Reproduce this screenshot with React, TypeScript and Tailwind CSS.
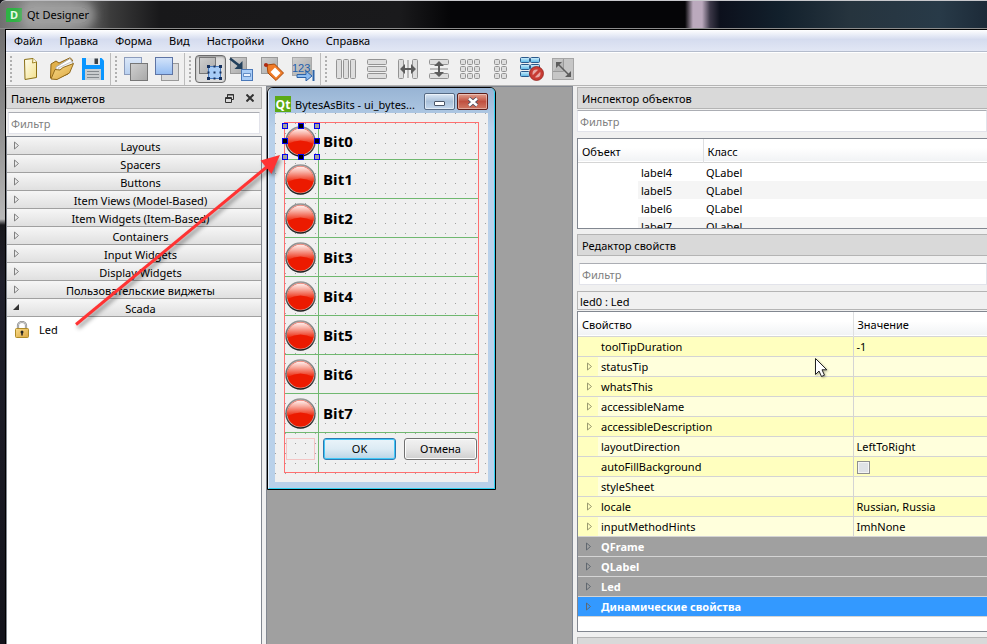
import type { ReactNode } from "react";

/* ---------- toolbar icons, drawn on a 24 x 24 grid ---------- */

function Icon({ children }: { children: ReactNode }) {
  return (
    <svg width="24" height="24" viewBox="0 0 24 24" aria-hidden="true">
      {children}
    </svg>
  );
}

const NewIcon = () => (
  <Icon>
    <path d="M5.500 2.500 L14 1.500 L17.500 5 V20.500 L6 22.500 Z" fill="url(#paper)" stroke="#8a6f14" />
    <path d="M14 1.500 L13.500 6 L17.500 5" fill="#fffbe0" stroke="#a58a2a" />
  </Icon>
);

const OpenIcon = () => (
  <Icon>
    <path d="M.5 21 L1 7 L6 4 L9 6 L20 .8 L22.500 3 L18 17 L6 22 Z" fill="#e0b04c" stroke="#8f6414" />
    <path d="M6 10 L20 1.500 L23 6 L18 14 L6 17 Z" fill="#fff" stroke="#a8a8a8" />
    <path d="M8 11 L22 4.500 L22.800 7 L9 13 Z" fill="#f3f3f3" stroke="#b5b5b5" strokeWidth=".7" />
    <path d="M1 22 L5 12.500 L10 13 L13 10.500 L23.500 6.500 L19.500 16 L7 22.500 Z" fill="url(#folder)" stroke="#946c1c" />
  </Icon>
);

const SaveIcon = () => (
  <Icon>
    <path d="M1 1 H20.500 L23 3.500 V23 H1 Z" fill="#0a96ff" />
    <rect x="5" y="1" width="14" height="7" fill="#e4e8ec" />
    <rect x="13.500" y="1.500" width="3.500" height="5.500" fill="#3c4044" />
    <rect x="4" y="12" width="16" height="11" fill="#c9ccce" />
    <path d="M6 14.500 H18 M6 17.500 H18 M6 20.500 H18" stroke="#858a8e" />
  </Icon>
);

const SendBackIcon = () => (
  <Icon>
    <rect x=".5" y=".5" width="17" height="17" fill="url(#paleSky)" stroke="#8c9cbc" />
    <rect x="6.500" y="6.500" width="17" height="17" fill="url(#steel)" stroke="#777" />
  </Icon>
);

const BringFrontIcon = () => (
  <Icon>
    <rect x="6.500" y="6.500" width="17" height="17" fill="#dadada" stroke="#999" />
    <rect x=".5" y=".5" width="17" height="17" fill="url(#sky)" stroke="#5e74a4" />
  </Icon>
);

const EditWidgetsIcon = () => (
  <Icon>
    <rect x="1.500" y=".5" width="16" height="16" fill="url(#steel)" stroke="#777" />
    <rect x="10.500" y="9.500" width="12" height="12" fill="#a8ccf6" stroke="#4a7cc0" />
    <path d="M9 8 h3 v3 h-3 Z M21 8 h3 v3 h-3 Z M9 20 h3 v3 h-3 Z M21 20 h3 v3 h-3 Z" fill="#16305c" />
    <path d="M15.500 8.500 h2 v2 h-2 Z M15.500 20.500 h2 v2 h-2 Z M9.500 14.500 h2 v2 h-2 Z M21.500 14.500 h2 v2 h-2 Z M15.500 14.500 h2 v2 h-2 Z" fill="#16305c" />
  </Icon>
);

const EditSignalsIcon = () => (
  <Icon>
    <rect x="1.500" y=".5" width="16" height="16" fill="url(#steel)" stroke="#999" />
    <path d="M1 1.500 L12 10" stroke="#22405c" strokeWidth="2.500" />
    <path d="M13.500 4 V12 H5.500 Z" fill="#22405c" />
    <rect x="12.500" y="12.500" width="11" height="11" fill="#a9cdf7" stroke="#4a78b8" />
    <path d="M14.500 16.500 H21.500 V19.500 H14.500 Z" fill="#eaf3ff" stroke="#4a78b8" strokeWidth=".8" />
  </Icon>
);

const EditBuddiesIcon = () => (
  <Icon>
    <rect x="1.500" y=".5" width="16" height="16" fill="url(#steel)" stroke="#999" />
    <path d="M4 8 L12 10 L14 18" fill="none" stroke="#333" />
    <path d="M7 8 L14.500 7 L23.500 16 L16 23.500 L8 16 Z" fill="#f07c28" stroke="#a84808" />
    <path d="M15 10.500 L20.500 16 L16 20.500 L10.500 15 Z" fill="#fff" />
    <circle cx="6" cy="8" r="2" fill="#b02a10" />
  </Icon>
);

const TabOrderIcon = () => (
  <Icon>
    <rect x="1.500" y=".5" width="19" height="18" fill="url(#steel)" stroke="#aaa" />
    <path d="M6 17.500 H15 V14 L21 19 L15 24 V20.500 H6 Z" fill="#8cbcf0" stroke="#2d62a6" />
    <path d="M22.500 13 V24" stroke="#2d62a6" strokeWidth="2" />
    <text x="1" y="15" fontSize="11" fill="#1d5fae" className="font-['Liberation_Sans',sans-serif]">123</text>
  </Icon>
);

function Slab({ x, y, w, h }: { x: number; y: number; w: number; h: number }) {
  return <rect x={x + 0.5} y={y + 0.5} width={w - 1} height={h - 1} rx="1" fill="#dedede" stroke="#949494" />;
}

const HorizontalIcon = () => (
  <Icon>
    {[2, 9, 16].map((x) => <Slab key={x} x={x} y={2} w={6} h={20} />)}
  </Icon>
);
const VerticalIcon = () => (
  <Icon>
    {[2, 9, 16].map((y) => <Slab key={y} x={2} y={y} w={20} h={6} />)}
  </Icon>
);
const HSplitIcon = () => (
  <Icon>
    <Slab x={2} y={2} w={6} h={20} />
    <Slab x={16} y={2} w={6} h={20} />
    <path d="M12 3 V21" stroke="#888" />
    <path d="M4 12 L9 7 V11 H15 V7 L20 12 L15 17 V13 H9 V17 Z" fill="#5c5c5c" />
  </Icon>
);
const VSplitIcon = () => (
  <Icon>
    <Slab x={2} y={2} w={20} h={6} />
    <Slab x={2} y={16} w={20} h={6} />
    <path d="M3 12 H21" stroke="#888" />
    <path d="M12 4 L7 9 H11 V15 H7 L12 20 L17 15 H13 V9 H17 Z" fill="#5c5c5c" />
  </Icon>
);
const GridIcon = () => (
  <Icon>
    {[2, 9, 16].map((x) => [2, 9, 16].map((y) => <Slab key={`${x}${y}`} x={x} y={y} w={6} h={6} />))}
  </Icon>
);
const FormIcon = () => (
  <Icon>
    {[5, 12].map((x) => [2, 9, 16].map((y) => <Slab key={`${x}${y}`} x={x} y={y} w={6} h={6} />))}
  </Icon>
);
const BreakIcon = () => (
  <Icon>
    {[0.5, 7.5, 14.5].map((y) =>
      [0.5, 10.5].map((x) => (
        <rect key={`${x}${y}`} x={x} y={y} width="9" height="5" rx="1" fill="url(#cyan)" stroke="#2a5a8c" />
      ))
    )}
    <circle cx="16.500" cy="16.500" r="5.500" fill="#e8a8a4" stroke="#c83c34" strokeWidth="3" />
    <path d="M12.500 20.500 L20.500 12.500" stroke="#c83c34" strokeWidth="3" />
    <circle cx="16.500" cy="16.500" r="7" fill="none" stroke="#8c1812" strokeWidth=".7" />
  </Icon>
);
const AdjustIcon = () => (
  <Icon>
    <rect x="1.500" y="1.500" width="21" height="21" fill="#c6c6c6" stroke="#a6a6a6" />
    <path d="M2 14.500 H12.500 V2" fill="#b8b8b8" stroke="#9a9a9a" />
    <path d="M7 7 L18 18" stroke="#5c5c5c" strokeWidth="1.500" />
    <path d="M5 5 H11 L5 11 Z M20 20 H14 L20 14 Z" fill="#5c5c5c" />
  </Icon>
);

const toolGroups: { label: string; pressed?: boolean; icon: () => ReactNode }[][] = [
  [
    { label: "Новый", icon: NewIcon },
    { label: "Открыть", icon: OpenIcon },
    { label: "Сохранить", icon: SaveIcon },
  ],
  [
    { label: "На задний план", icon: SendBackIcon },
    { label: "На передний план", icon: BringFrontIcon },
  ],
  [
    { label: "Изменение виджетов", icon: EditWidgetsIcon, pressed: true },
    { label: "Изменение сигналов", icon: EditSignalsIcon },
    { label: "Изменение партнёров", icon: EditBuddiesIcon },
    { label: "Порядок обхода", icon: TabOrderIcon },
  ],
  [
    { label: "По горизонтали", icon: HorizontalIcon },
    { label: "По вертикали", icon: VerticalIcon },
    { label: "Разделитель по горизонтали", icon: HSplitIcon },
    { label: "Разделитель по вертикали", icon: VSplitIcon },
    { label: "По сетке", icon: GridIcon },
    { label: "В две колонки", icon: FormIcon },
    { label: "Удалить компоновщик", icon: BreakIcon },
    { label: "Подогнать размер", icon: AdjustIcon },
  ],
];

function Gradients() {
  return (
    <svg width="0" height="0" className="absolute" aria-hidden="true">
      <defs>
        <linearGradient id="paper" x1="0" y1="0" x2="1" y2="1">
          <stop offset="0" stopColor="#fffef0" />
          <stop offset="1" stopColor="#f3e08a" />
        </linearGradient>
        <linearGradient id="folder" x1="0" y1="0" x2="1" y2="1">
          <stop offset="0" stopColor="#f9dc8a" />
          <stop offset="1" stopColor="#dca640" />
        </linearGradient>
        <linearGradient id="sky" x1="0" y1="0" x2="0" y2="1">
          <stop offset="0" stopColor="#d4e4fa" />
          <stop offset="1" stopColor="#94bcf2" />
        </linearGradient>
        <linearGradient id="paleSky" x1="0" y1="0" x2="0" y2="1">
          <stop offset="0" stopColor="#dce8f8" />
          <stop offset="1" stopColor="#b8d0f0" />
        </linearGradient>
        <linearGradient id="steel" x1="0" y1="0" x2="1" y2="1">
          <stop offset="0" stopColor="#d0d0d0" />
          <stop offset="1" stopColor="#a8a8a8" />
        </linearGradient>
        <linearGradient id="cyan" x1="0" y1="0" x2="0" y2="1">
          <stop offset="0" stopColor="#d4f0fc" />
          <stop offset="1" stopColor="#54b4e4" />
        </linearGradient>
        <linearGradient id="ledRim" x1="0" y1="0" x2="0" y2="1">
          <stop offset="0" stopColor="#989898" />
          <stop offset=".6" stopColor="#585858" />
          <stop offset="1" stopColor="#181818" />
        </linearGradient>
        <linearGradient id="ledGloss" x1="0" y1="0" x2="0" y2="1">
          <stop offset="0" stopColor="#fff0ee" />
          <stop offset=".35" stopColor="#f8b0a4" />
          <stop offset="1" stopColor="#ec2408" />
        </linearGradient>
      </defs>
    </svg>
  );
}

/* ---------- small shared parts ---------- */

function Expander({ className = "" }: { className?: string }) {
  return (
    <svg width="7" height="9" viewBox="0 0 7 9" className={className} aria-hidden="true">
      <path d="M1.500 1 V8 L5.500 4.500 Z" fill="none" stroke="currentColor" />
    </svg>
  );
}

function DockTitle({ children, controls }: { children: ReactNode; controls?: ReactNode }) {
  return (
    <div
      className={`flex h-[22px] shrink-0 items-center justify-between border-y border-l border-[#b4b4b4] bg-[#d9d9d9] px-1 leading-4 ${
        controls ? "border-r" : ""
      }`}
    >
      <h2 className="pt-0.5 whitespace-nowrap">{children}</h2>
      {controls}
    </div>
  );
}

function Filter({ label }: { label: string }) {
  return (
    <input
      type="text"
      aria-label={label}
      placeholder="Фильтр"
      className="block h-[22px] w-full min-w-0 border border-[#e2e3ea] border-t-[#abadb3] bg-white px-0.5 placeholder:text-[#808080] outline-none"
    />
  );
}

/* ---------- panels ---------- */

const categories = [
  "Layouts",
  "Spacers",
  "Buttons",
  "Item Views (Model-Based)",
  "Item Widgets (Item-Based)",
  "Containers",
  "Input Widgets",
  "Display Widgets",
  "Пользовательские виджеты",
  "Scada",
];

function WidgetBox() {
  return (
    <aside className="flex w-[256px] shrink-0 flex-col">
      <DockTitle
        controls={
          <span className="flex items-center gap-3 pr-[3px] text-[#333]">
            <button type="button" aria-label="Открепить">
              <svg width="9" height="9" viewBox="0 0 9 9">
                <path d="M2.500 3 V.5 H8.500 V5.500 H6.500" fill="none" stroke="currentColor" />
                <path d="M2 1 H9" stroke="currentColor" />
                <path d="M.5 3.500 H6.500 V8.500 H.5 Z M.5 4.500 H6.500" fill="none" stroke="currentColor" />
              </svg>
            </button>
            <button type="button" aria-label="Закрыть панель">
              <svg width="8" height="8" viewBox="0 0 8 8">
                <path d="M.5 .5 L7.500 7.500 M7.500 .5 L.5 7.500" stroke="currentColor" strokeWidth="2" />
              </svg>
            </button>
          </span>
        }
      >
        Панель виджетов
      </DockTitle>
      <div className="px-0.5 pt-[3px] pb-0.5">
        <Filter label="Фильтр виджетов" />
      </div>
      <div className="flex-1 border-x border-t border-[#828790] bg-white">
        {categories.map((name) => (
          <button
            key={name}
            type="button"
            className="flex h-[18px] w-full items-center border-b border-[#a0a0a0] bg-linear-to-b from-[#f6f6f6] to-[#e0e0e0] px-1.5 leading-4"
          >
            {name === "Scada" ? (
              <svg width="7" height="9" viewBox="0 0 7 9" aria-hidden="true">
                <path d="M6 1 V7 H0 Z" fill="#333" />
              </svg>
            ) : (
              <Expander className="text-[#808080]" />
            )}
            <span className="flex-1 pt-0.5 pl-1.5">{name}</span>
          </button>
        ))}
        <div className="flex items-center gap-2.5 px-2 py-1">
          <svg width="14" height="17" viewBox="0 0 14 17" aria-hidden="true">
            <path d="M3 8 V4.500 A4 3.500 0 0 1 11 4.500 V8" fill="none" stroke="#8c8c8c" strokeWidth="2.200" />
            <path d="M3 8 V4.500 A4 3.500 0 0 1 11 4.500 V8" fill="none" stroke="#d8d8d8" strokeWidth=".8" />
            <rect x=".5" y="7.500" width="13" height="9" rx="1" fill="url(#folder)" stroke="#b08c28" />
            <circle cx="7" cy="11" r="1.500" fill="#222" />
            <path d="M7 11 V14.500" stroke="#222" strokeWidth="1.500" />
          </svg>
          <span className="leading-4">Led</span>
        </div>
      </div>
    </aside>
  );
}

function Handles() {
  const spots = [
    "-left-[3px] -top-[3px] bg-[#a0a0a0]",
    "left-[13px] -top-[3px] bg-black",
    "left-[29px] -top-[3px] bg-[#a0a0a0]",
    "-left-[3px] top-[12px] bg-black",
    "left-[29px] top-[12px] bg-black",
    "-left-[3px] top-[28px] bg-[#a0a0a0]",
    "left-[13px] top-[28px] bg-black",
    "left-[29px] top-[28px] bg-[#a0a0a0]",
  ];
  return (
    <>
      {spots.map((s) => (
        <span key={s} className={`absolute size-1.5 border border-[#0000f0] ${s}`} />
      ))}
    </>
  );
}

function Led() {
  return (
    <svg width="31" height="31" viewBox="0 0 31 31" className="block" aria-hidden="true">
      <circle cx="15.500" cy="15.500" r="15.200" fill="url(#ledRim)" />
      <circle cx="15.500" cy="15.500" r="13.800" fill="#d8c0bc" />
      <circle cx="15.500" cy="15.500" r="13.200" fill="#ec1a00" />
      <path d="M2.500 18 A13.200 13.200 0 1 1 28.500 18 Q15.500 11 2.500 18 Z" fill="url(#ledGloss)" />
    </svg>
  );
}

function FormWindow() {
  return (
    <section
      aria-label="BytesAsBits"
      className="w-[229px] rounded-t-md border border-black bg-[#b9d1ea] text-black"
    >
      <div className="rounded-t-[5px] border-r border-b border-l border-r-[#30d0f0] border-b-[#30d0f0] border-l-[#e4f0fc] bg-linear-to-b from-[#98b4d4] via-[#b9d1ea] via-10% to-[#b9d1ea] px-1.5 pb-1.5">
        <header className="flex h-[25px] items-start gap-1 pt-[5px]">
          <svg width="16" height="16" viewBox="0 0 16 16" className="mt-[3px] shrink-0" aria-hidden="true">
            <rect width="16" height="16" fill="#5caa15" />
            <text x="8" y="12.500" textAnchor="middle" fontSize="12" fontWeight="700" fill="#fff" className="font-['Open_Sans',sans-serif]">Qt</text>
          </svg>
          <h2 className="mt-1 flex-1 leading-4 whitespace-nowrap">BytesAsBits - ui_bytes...</h2>
          <div className="flex shrink-0 gap-0.5">
            <button
              type="button"
              aria-label="Свернуть"
              className="flex h-[17px] w-[31px] items-center justify-center rounded-xs border border-[#566a84] bg-linear-to-b from-[#dce8f5] via-[#a9c0da] via-50% to-[#c4d8ee] shadow-[inset_0_0_0_1px_#ffffff80]"
            >
              <span className="mt-1 block h-[5px] w-[11px] rounded-[1px] border border-[#4a5568] bg-white" />
            </button>
            <button
              type="button"
              aria-label="Закрыть"
              className="flex h-[17px] w-[31px] items-center justify-center rounded-xs border border-[#5c1c18] bg-linear-to-b from-[#e0a090] via-[#c05040] via-50% to-[#d07864] shadow-[inset_0_0_0_1px_#ffffff60]"
            >
              <svg width="12" height="10" viewBox="0 0 12 10" aria-hidden="true">
                <path d="M2 1.500 L10 8.500 M10 1.500 L2 8.500" stroke="#444c60" strokeWidth="4" />
                <path d="M2 1.500 L10 8.500 M10 1.500 L2 8.500" stroke="#fff" strokeWidth="2.500" />
              </svg>
            </button>
          </div>
        </header>
        <div className="bg-[#f0f0f0] bg-[conic-gradient(from_270deg_at_1px_1px,#a0a0a0_90deg,transparent_0)] bg-size-[10px_10px] p-[9px]">
          <div className="border border-[#ff7070]">
            {[0, 1, 2, 3, 4, 5, 6, 7].map((n) => (
              <div
                key={n}
                className={`flex border-b border-[#70b870] ${n === 0 ? "h-[37px]" : "h-[39px]"}`}
              >
                <div className="flex w-[34px] items-center border-r border-[#70b870]">
                  <div className="relative">
                    <Led />
                    {n === 0 && <Handles />}
                  </div>
                </div>
                <span className="flex items-center pl-1">
                  <span className="bg-[#f0f0f0] font-['Open_Sans',sans-serif] text-[15px] leading-5 font-bold">{`Bit${n}`}</span>
                </span>
              </div>
            ))}
            <div className="flex h-[39px]">
              <div className="w-[34px] border-r border-[#70b870] px-px pt-[5px]">
                <div className="h-[22px] w-[29px] border border-[#f4c4c4]" />
              </div>
              <div className="flex flex-1 gap-2 pt-[5px] pr-px pl-1">
                <button
                  type="button"
                  className="h-[22px] flex-1 rounded-[3px] border border-[#2c78b0] bg-linear-to-b from-[#eaf4fa] from-0% via-[#dcebf4] via-50% to-[#b8d4e6] leading-4 shadow-[inset_0_0_0_1px_#40c8f8]"
                >
                  OK
                </button>
                <button
                  type="button"
                  className="h-[22px] flex-1 rounded-[3px] border border-[#707070] bg-linear-to-b from-[#f2f2f2] via-[#e6e6e6] via-50% to-[#cfcfcf] leading-4 shadow-[inset_0_0_0_1px_#fcfcfc]"
                >
                  Отмена
                </button>
              </div>
            </div>
          </div>
        </div>
      </div>
    </section>
  );
}

function ObjectInspector() {
  return (
    <section>
      <DockTitle>Инспектор объектов</DockTitle>
      <div className="pt-px">
        <Filter label="Фильтр объектов" />
      </div>
      <div className="mt-[6px] h-[91px] overflow-hidden border border-r-0 border-[#828790] bg-white">
        <table className="w-full table-fixed border-collapse text-left">
          <colgroup>
            <col className="w-[60px]" />
            <col className="w-[65px]" />
            <col />
          </colgroup>
          <thead>
            <tr className="h-[23px] border-b border-[#d5d5d5] bg-linear-to-b from-white from-40% to-[#f1f3f5] leading-4">
              <th colSpan={2} className="border-r border-[#dedfe1] p-0 pt-1 pl-1 font-normal">Объект</th>
              <th className="p-0 pt-1 pl-1 font-normal">Класс</th>
            </tr>
          </thead>
          <tbody>
            {["label4", "label5", "label6", "label7"].map((name, i) => (
              <tr key={name} className="h-[18px] leading-4">
                <td className="p-0" />
                <td className={`p-0 pt-0.5 pl-[3px] ${i % 2 ? "bg-[#f5f5f5]" : ""}`}>{name}</td>
                <td className={`p-0 pt-0.5 pl-[3px] ${i % 2 ? "bg-[#f5f5f5]" : ""}`}>QLabel</td>
              </tr>
            ))}
          </tbody>
        </table>
      </div>
    </section>
  );
}

const properties: { name: string; value?: string; expandable?: boolean; check?: boolean }[] = [
  { name: "toolTipDuration", value: "-1" },
  { name: "statusTip", expandable: true },
  { name: "whatsThis", expandable: true },
  { name: "accessibleName", expandable: true },
  { name: "accessibleDescription", expandable: true },
  { name: "layoutDirection", value: "LeftToRight" },
  { name: "autoFillBackground", check: true },
  { name: "styleSheet" },
  { name: "locale", value: "Russian, Russia", expandable: true },
  { name: "inputMethodHints", value: "ImhNone", expandable: true },
];

function PropertyEditor() {
  return (
    <section className="mt-[5px]">
      <DockTitle>Редактор свойств</DockTitle>
      <div className="pt-[7px] pl-0.5">
        <Filter label="Фильтр свойств" />
      </div>
      <div className="mt-[6px] h-[19px] border border-r-0 border-[#b4b4b4] pl-0.5 leading-[19px]">led0 : Led</div>
      <div className="mt-px border border-r-0 border-[#828790] bg-white pb-[14px]">
        <table className="w-full table-fixed border-collapse text-left">
          <colgroup>
            <col className="w-[20px]" />
            <col className="w-[255px]" />
            <col />
          </colgroup>
          <thead>
            <tr className="h-[24px] border-b border-[#d5d5d5] bg-linear-to-b from-white from-40% to-[#f1f3f5] leading-4">
              <th colSpan={2} className="border-r border-[#dedfe1] p-0 pt-0.5 pl-1 font-normal">Свойство</th>
              <th className="p-0 pt-0.5 pl-1 font-normal">Значение</th>
            </tr>
          </thead>
          <tbody>
            {properties.map((p, i) => (
              <tr
                key={p.name}
                className={`h-[20px] border-b border-[#d4d4d4] leading-4 ${i % 2 ? "bg-[#ffffdc]" : "bg-[#ffffbf]"}`}
              >
                <td className="bg-[#ffffbf] p-0 pl-2">{p.expandable && <Expander className="block text-[#9a9a70]" />}</td>
                <td className="border-r border-[#d4d4d4] p-0 pt-0.5 pl-[3px]">{p.name}</td>
                <td className="p-0 pt-0.5 pl-[3px]">
                  {p.value}
                  {p.check && (
                    <input
                      type="checkbox"
                      aria-label={p.name}
                      className="block size-[13px] appearance-none border border-[#8e8f8f] bg-[#dfe2e6] shadow-[inset_0_0_0_1px_#f4f4f4]"
                    />
                  )}
                </td>
              </tr>
            ))}
            {["QFrame", "QLabel", "Led", "Динамические свойства"].map((name, i) => (
              <tr
                key={name}
                className={`h-[20px] border-b border-[#d4d4d4] leading-4 font-bold text-white ${i === 3 ? "bg-[#3399ff]" : "bg-[#a0a0a0]"}`}
              >
                <td className="p-0 pl-[7px]">
                  <Expander className="block text-[#606870]" />
                </td>
                <td colSpan={2} className="p-0 pt-0.5 pl-[3px]">{name}</td>
              </tr>
            ))}
          </tbody>
        </table>
      </div>
    </section>
  );
}

/* ---------- annotations over the window ---------- */

function PointerArrow() {
  return (
    <svg
      width="220"
      height="190"
      viewBox="0 0 220 190"
      className="pointer-events-none absolute top-[145px] left-[70px] drop-shadow-[2px_3px_2px_#00000070]"
      aria-hidden="true"
    >
      <path d="M6 179.500 L198 21" stroke="#ff3333" strokeWidth="3" />
      <path d="M210 10 L201.500 29 L190.500 15.500 Z" fill="#ff3333" />
    </svg>
  );
}

function MouseCursor() {
  return (
    <svg
      width="13"
      height="20"
      viewBox="0 0 13 20"
      className="pointer-events-none absolute top-[358px] left-[815px] drop-shadow-[1px_1px_1px_#00000050]"
      aria-hidden="true"
    >
      <path d="M.5 .5 V16.500 L4 13 L6.500 18.500 L9.500 17.200 L7 11.800 H11.800 Z" fill="#fff" stroke="#222" />
    </svg>
  );
}

export default function App() {
  return (
    <div className="relative flex min-h-screen flex-col overflow-hidden bg-[#16161c] font-['Noto_Sans','Open_Sans',sans-serif] text-[11px] text-black">
      <Gradients />
      <header className="flex h-[29px] shrink-0 items-center gap-[5px] rounded-tl-md border-t border-b border-t-[#c8c8cc] border-b-[#8c8c8c] bg-[linear-gradient(90deg,#707070_0px,#8c8c8c_30px,#808080_70px,#3c3c3c_110px,#18181a_160px,#1a1a1c_400px,#050507_450px,#050507_685px,#bba9bd_693px,#bba9bd_702px,#3c3848_710px,#0c101c_720px,#12202c_780px,#26343e_850px,#283a48_940px,#1c2a38_987px)] pl-1.5">
        <svg width="16" height="14" viewBox="0 0 16 14" aria-hidden="true">
          <path d="M1 0 H16 V12 L14 14 H0 V2 Z" fill="#2fb344" />
          <text x="8" y="11" textAnchor="middle" fontSize="11" fontWeight="700" fill="#e8ffe8">D</text>
        </svg>
        <h1 className="rounded-full bg-[#a8a8a8]/70 leading-4 shadow-[0_0_8px_6px_#a8a8a8b0]">Qt Designer</h1>
      </header>

      <div className="flex flex-1 flex-col bg-[linear-gradient(180deg,#707070_0px,#909090_100px,#b8b8b8_190px,#18181c_196px,#20202c_250px,#14141c_600px)] pl-[5px]">
        <div className="flex flex-1 flex-col border-t border-l border-black bg-[#f0f0f0]">
          <nav className="flex h-[22px] shrink-0 items-center gap-[17px] border-b border-[#b4bccc] bg-linear-to-b from-white from-0% via-[#d5dcef] via-45% to-[#e2e7f5] px-2">
            {["Файл", "Правка", "Форма", "Вид", "Настройки", "Окно", "Справка"].map((m) => (
              <button key={m} type="button" className="leading-4">{m}</button>
            ))}
          </nav>

          <div role="toolbar" className="flex h-[34px] shrink-0 border-t border-b border-t-white border-b-[#b4b4b4]">
            {toolGroups.map((group, i) => (
              <div
                key={i}
                className={`flex items-center pr-px ${i < toolGroups.length - 1 ? "border-r border-[#bcbcbc]" : ""}`}
              >
                <span className="mr-1 ml-1 h-[26px] w-0.5 bg-[linear-gradient(#b0b0b0_50%,transparent_50%)] bg-size-[2px_4px]" />
                {group.map((t) => (
                  <button
                    key={t.label}
                    type="button"
                    aria-label={t.label}
                    className={`flex h-[28px] w-[31px] items-center justify-center rounded-sm border pr-px ${
                      t.pressed ? "border-[#6c6c6c] bg-[#dcdcdc] shadow-[inset_0_1px_2px_#00000050]" : "border-transparent"
                    }`}
                  >
                    <t.icon />
                  </button>
                ))}
              </div>
            ))}
          </div>

          <div className="flex flex-1 pt-px">
            <WidgetBox />
            <main className="-mt-px ml-1 min-w-0 flex-1 border-t border-r border-l border-[#828790] bg-[#a0a0a0]">
              <FormWindow />
            </main>
            <aside className="ml-1 flex w-[410px] shrink-0 flex-col">
              <ObjectInspector />
              <PropertyEditor />
              <div className="mt-[5px] flex-1 border-t border-l border-[#b4b4b4] bg-[#d9d9d9]" />
            </aside>
          </div>
        </div>
      </div>

      <PointerArrow />
      <MouseCursor />
    </div>
  );
}
